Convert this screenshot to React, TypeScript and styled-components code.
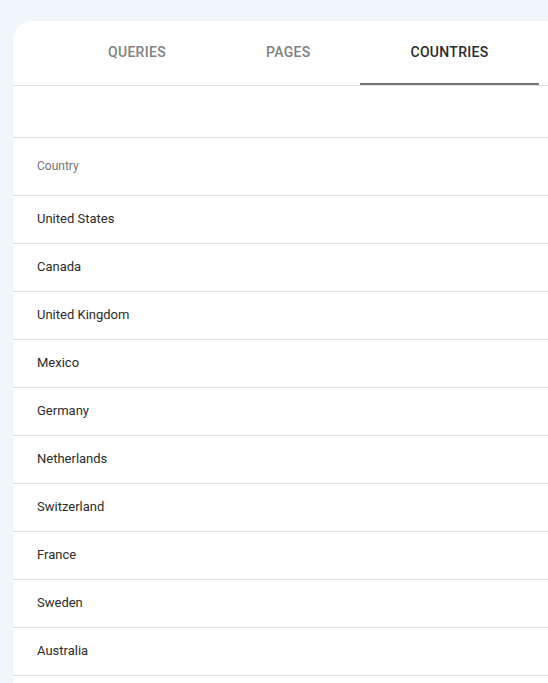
import React, { useState } from "react";
import styled, { createGlobalStyle } from "styled-components";

const GlobalStyle = createGlobalStyle`
  html, body {
    margin: 0;
    padding: 0;
    background: #f1f6fd;
    font-family: Roboto, "Noto Sans", Arial, sans-serif;
    overflow: hidden;
  }
`;

const Page = styled.div`
  padding: 21px 0 0 13px;
  height: 683px;
  box-sizing: border-box;
`;

const Card = styled.div`
  background: #ffffff;
  border-top-left-radius: 20px;
  width: 560px;
  height: 100%;
  overflow: hidden;
`;

const TabBar = styled.div`
  display: flex;
  height: 64px;
  padding-left: 45px;
  border-bottom: 1px solid #e0e0e0;
`;

const Tab = styled.button<{ $active?: boolean }>`
  position: relative;
  border: 0;
  background: none;
  padding: 0 50px 2px;
  font-family: Roboto, Arial, sans-serif;
  font-size: 14px;
  font-weight: 500;
  letter-spacing: 0.3px;
  text-transform: uppercase;
  color: ${(p) => (p.$active ? "#2b2b2b" : "#808080")};
  cursor: pointer;
  &::after {
    content: "";
    display: ${(p) => (p.$active ? "block" : "none")};
    position: absolute;
    left: 0;
    right: 0;
    bottom: 0;
    height: 2px;
    background: #757575;
  }
`;

const Spacer = styled.div`
  height: 51px;
  border-bottom: 1px solid #e0e0e0;
`;

const Row = styled.div<{ $head?: boolean }>`
  display: flex;
  align-items: center;
  box-sizing: border-box;
  height: ${(p) => (p.$head ? "58px" : "48px")};
  padding: 0 0 2px 24px;
  border-bottom: 1px solid #e0e0e0;
  font-size: ${(p) => (p.$head ? "12px" : "13px")};
  color: ${(p) => (p.$head ? "#757575" : "#2b2b2b")};
`;

const tabs = ["Queries", "Pages", "Countries"];
const countries = [
  "United States",
  "Canada",
  "United Kingdom",
  "Mexico",
  "Germany",
  "Netherlands",
  "Switzerland",
  "France",
  "Sweden",
  "Australia",
];

export default function App() {
  const [active, setActive] = useState(2);
  return (
    <>
      <GlobalStyle />
      <Page>
        <Card>
          <TabBar>
            {tabs.map((t, i) => (
              <Tab key={t} $active={i === active} onClick={() => setActive(i)}>
                {t}
              </Tab>
            ))}
          </TabBar>
          <Spacer />
          <Row $head>Country</Row>
          {countries.map((c) => (
            <Row key={c}>{c}</Row>
          ))}
        </Card>
      </Page>
    </>
  );
}
